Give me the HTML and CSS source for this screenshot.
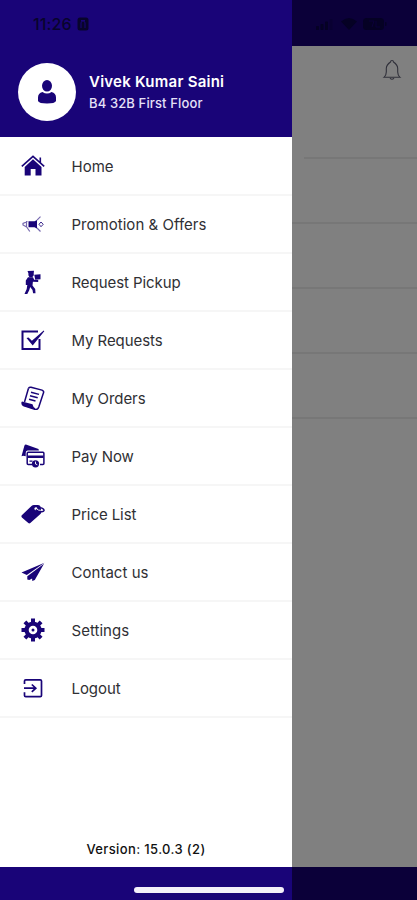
FILE: index.html
```html
<!DOCTYPE html>
<html lang="en">
<head>
<meta charset="utf-8">
<title>Menu</title>
<link rel="stylesheet" href="styles.css">
</head>
<body>
<div class="screen">
  <aside class="drawer">
    <header class="profile">
      <div class="clock"><span>11:26</span>
        <svg width="12" height="14" viewBox="0 0 12 14"><rect x=".5" y=".5" width="11" height="13" rx="2.5" fill="#08042c"/><path d="M4 11V6a2 2 0 0 1 4 0v5M4 3.500h4" fill="none" stroke="#190478" stroke-width="1"/></svg>
      </div>
      <div class="user">
        <div class="avatar">
          <svg width="20" height="26" viewBox="0 0 20 26"><ellipse cx="10" cy="6.800" rx="5" ry="5.800"/><path d="M1 22v-3.500q0-4.500 4.500-5.500 4.500 3 9 0 4.500 1 4.500 5.500V22q-1 2.500-9 2.500T1 22z"/></svg>
        </div>
        <div class="who">
          <div class="name">Vivek Kumar Saini</div>
          <div class="address">B4 32B First Floor</div>
        </div>
      </div>
    </header>
    <nav class="menu">
      <a class="item"><svg class="icon" viewBox="0 0 24 24"><path d="M12 5.200 20.500 13v8.500h-6V15H9.700v6.500h-6V13z"/><path d="M.8 12.300 12 2.300l11.200 10M19.300 3.500v5" fill="none" stroke="#190478" stroke-width="1.600"/></svg><span>Home</span></a>
      <a class="item"><svg class="icon" viewBox="0 0 24 24"><path d="M7.500 9.200h6l2.500-1.200v8.500l-2.500-1.300h-6z"/><path d="M16 8.200l3.500-3.500M16 16l3.500 3.500M6.500 9.500 2 11.500v1.500l4.500 2.500M6 15.500l2.800 4M5.500 9v6.500" fill="none" stroke="#190478" stroke-opacity=".6" stroke-width="1.200"/><path d="M20 10l2.200 2.300-2.200 2.400-2-2.400z" fill="none" stroke="#190478" stroke-opacity=".85"/></svg><span>Promotion &amp; Offers</span></a>
      <a class="item"><svg class="icon" viewBox="0 0 24 24"><path d="M6.500 1 13 .8l-.3 2.500.1 2-1.600 1.900H8.500L7.400 5.300V3.200z"/><path d="m13.300 4.800 6.200-.5v5l-5.300.5z"/><path d="M7 7.300h5l1.200 2.500 4 .3v2l-5.300-.3-.4 3.700 2.700 3.500.3 4.300h-2.400l-.6-3.300-2.300-3-1 3.200-2 4-2.700-.3 2.200-5 .6-4-1.500 0v-4.500z"/></svg><span class="tight">Request Pickup</span></a>
      <a class="item"><svg class="icon" viewBox="0 0 24 24"><path d="M17 3.500H1.500v17.500H18.500v-10" fill="none" stroke="#190478" stroke-width="2"/><path d="m5.500 10 2-.6 3.400 3.300L22.700 2.600l.6.7L11.700 17.500z"/></svg><span class="tight">My Requests</span></a>
      <a class="item"><svg class="icon" viewBox="0 0 24 24"><path d="M7.500 2.200q1-1.300 2.500-.9l11 2.800q2.300 1 1.400 3l-4.600 14q-1.100 3-4 2.200L2.500 19.500q-1.900-1-1.200-3.500" fill="none" stroke="#190478" stroke-width="1.500"/><path d="M7.500 2.200 3.500 16M10 6.200l8 2.200M9 9.700l7.700 2.100M8 13.200l6.500 1.800" fill="none" stroke="#190478" stroke-width="1.500"/><path d="m1 15.500 10.500 2.800q.5 3 3 4.200l-1 .8L3 20q-2.500-1-2-4.500z"/></svg><span class="tight">My Orders</span></a>
      <a class="item"><svg class="icon" viewBox="0 0 24 24"><path d="M.5 12.300 3.300 2q.6-1.800 2.300-1.300L17.500 5l.4 1.500H6.500q-1.800.2-1.800 2.500v3.200l-2.500-.5z"/><path d="M11.500 20.500H7.200q-1 0-1-1V9.500q0-1.200 1-1.200h14.700q1 0 1 1.200v10q0 1-1 1H19" fill="none" stroke="#190478" stroke-width="1.500"/><path d="M6.500 11.500h16V14h-16zM8.500 16.500h3v1.200h-3z"/><circle cx="14.500" cy="19.800" r="3.600"/><path d="M14.500 17.600V20l1.800.7" fill="none" stroke="#fff" stroke-width=".9"/></svg><span class="tight">Pay Now</span></a>
      <a class="item"><svg class="icon" viewBox="0 0 24 24"><path fill-rule="evenodd" d="M.8 13.200 10.500 4q1-.9 2.500-.9h4q2 0 2.800 2l.4 5.500q0 1-1.300 1.900L9.300 21q-1 .9-2 0L.9 15.500q-1-1-.1-2.300zM14.800 5.200a1.500 1.500 0 1 0 .1 3 1.500 1.500 0 0 0-.1-3z"/><path d="M15 7.200q2.500 2.600 5.500 2.600 2.700-.2 2.600-1.600-.2-1.500-3.800-2.500" fill="none" stroke="#190478" stroke-width="1.400"/><path d="M15.300 6.700q2 1.900 4.500 1.700" fill="none" stroke="#fff" stroke-width=".9"/></svg><span class="tight">Price List</span></a>
      <a class="item"><svg class="icon" viewBox="0 0 24 24"><path d="M23.500 2.800.5 12.500l5.300 2.600zM23 3.800 6.300 16.200v3.300l2 .5 2.800-1.500.2 2.500 2.500-1z"/></svg><span>Contact us</span></a>
      <a class="item"><svg class="icon" viewBox="0 0 24 24"><path d="M12 .5v23M.5 12h23M3.900 3.900l16.200 16.200M20.100 3.900 3.900 20.100" stroke="#190478" stroke-width="4"/><circle cx="12" cy="12" r="8.600"/><circle cx="12" cy="12" r="4.300" fill="#fff"/><circle cx="12" cy="12" r="1.500"/></svg><span>Settings</span></a>
      <a class="item"><svg class="icon" viewBox="0 0 24 24"><path d="M3.500 8V5q0-1.200 1.300-1.200h14.400q1.300 0 1.300 1.200v14.500q0 1.200-1.300 1.200H4.800q-1.300 0-1.300-1.200v-3.300M3 12.200h11M10.800 8.500l4 3.700-4 3.700" fill="none" stroke="#190478" stroke-width="1.700"/></svg><span class="tight">Logout</span></a>
    </nav>
    <div class="version"><span>Version: 15.0.3 (2)</span></div>
    <div class="bottom"></div>
  </aside>
  <main class="page">
    <div class="status">
      <svg width="80" height="18" viewBox="0 0 80 18" fill="#050124"><rect x="3" y="11" width="3" height="4" rx=".8"/><rect x="7.500" y="9" width="3" height="6" rx=".8"/><rect x="12" y="6.500" width="3" height="8.500" rx=".8"/><rect x="16.500" y="4" width="3" height="11" rx=".8" opacity=".3"/><path d="M28 6.500q8-7 16 0L36 15z"/><rect x="50" y="3" width="21" height="12" rx="3.500"/><rect x="72" y="7" width="1.500" height="4" rx=".7"/><path d="M56 6h5l-2 6M63 6v6h4" fill="none" stroke="#0b0039"/></svg>
    </div>
    <div class="toolbar">
      <svg width="20" height="24" viewBox="0 0 20 24" fill="none" stroke="#30303a" stroke-width="1.100"><path d="M2 19.300q2.300-2 2.300-5.300V10.500q0-3.500 4.200-6.500 0-1.500 1.500-1.500t1.500 1.500q4.200 3 4.200 6.500V14q0 3.300 2.300 5.300z"/><path d="M8 20q2 2.600 4 0"/></svg>
    </div>
    <div class="line first"></div><div class="line"></div><div class="line"></div><div class="line"></div><div class="line"></div>
    <div class="page-end"></div>
  </main>
  <div class="home-bar"></div>
</div>
</body>
</html>
```
FILE: styles.css
```css
* { box-sizing: border-box; }
body { margin: 0; font-family: Inter, "Liberation Sans", sans-serif; }
.screen { position: relative; display: flex; width: 417px; height: 900px; overflow: hidden; background: #808080; }
.drawer { display: flex; flex-direction: column; width: 292px; background: #fff; }
.profile { height: 137px; padding-top: 15px; background: #190478; }
.clock { display: flex; align-items: center; gap: 5px; height: 17px; padding-left: 33px; color: #08042c; font-size: 16px; font-weight: 500; letter-spacing: .15px; }
.user { display: flex; align-items: center; gap: 13px; margin-top: 31px; padding-left: 18px; }
.avatar { display: grid; place-items: center; width: 58px; height: 58px; border-radius: 50%; background: #fff; }
.avatar svg { fill: #190478; }
.who { color: #fff; white-space: nowrap; }
.name { font-size: 15px; line-height: 22px; font-weight: 600; letter-spacing: .25px; }
.address { color: #e5e0f7; font-size: 13px; line-height: 21px; font-weight: 500; letter-spacing: .13px; }
.menu { display: flex; flex-direction: column; padding-top: 1px; }
.item { display: flex; align-items: center; gap: 26.500px; height: 58px; padding-left: 21px; border-bottom: 2px solid #f6f6f6; color: #303034; font-size: 15px; white-space: nowrap; }
.item span { padding-top: 1px; letter-spacing: .03px; }
.item .tight { letter-spacing: -.07px; }
.icon { width: 24px; height: 24px; fill: #190478; }
.version { display: flex; flex: 1; align-items: flex-end; justify-content: center; padding-bottom: 9px; font-size: 13px; line-height: 18px; font-weight: 500; letter-spacing: .37px; color: #111; }
.bottom { height: 33px; background: #190478; }
.page { display: flex; flex: 1; flex-direction: column; }
.status { height: 46px; padding: 15px 0 0 21px; background: #0b0039; }
.toolbar { display: flex; justify-content: flex-end; height: 111px; padding: 12px 15px 0 0; }
.line { height: 2px; margin-bottom: 63px; background: #777; }
.line.first { margin-left: 12px; }
.page-end { height: 33px; margin-top: auto; background: #0b0039; }
.home-bar { position: absolute; left: 134px; top: 887px; width: 150px; height: 6px; border-radius: 3px; background: #f3f1fa; }
```
